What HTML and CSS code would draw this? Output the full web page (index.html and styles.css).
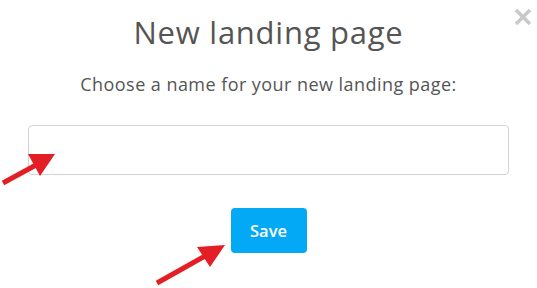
FILE: index.html
```html
<!DOCTYPE html>
<html lang="en">
<head>
<meta charset="UTF-8">
<title>New landing page</title>
<link rel="stylesheet" href="styles.css">
</head>
<body>
<div class="modal">
  <button class="close" aria-label="Close">
    <svg width="18" height="18" viewBox="0 0 18 18"><path d="M2 2 L16 16 M16 2 L2 16" stroke="#c9c9c9" stroke-width="3.6" stroke-linecap="butt"/></svg>
  </button>
  <h1 class="title">New landing page</h1>
  <p class="subtitle">Choose a name for your new landing page:</p>
  <input class="name" type="text">
  <div class="actions">
    <button class="save">Save</button>
  </div>
  <svg class="arrows" width="537" height="288" viewBox="0 0 537 288">
    <line x1="3" y1="183" x2="36" y2="165" stroke="#e31e24" stroke-width="5"/>
    <polygon points="28,154 55,154 40,176" fill="#e31e24"/>
    <line x1="157" y1="283" x2="205" y2="256" stroke="#e31e24" stroke-width="5"/>
    <polygon points="197,247 225,245 210,267" fill="#e31e24"/>
  </svg>
</div>
</body>
</html>
```

FILE: styles.css
```css
*{
    box-sizing:border-box;
    margin:0;
    padding:0;
}
body{
    font-family:"Open Sans", sans-serif;
    background:#fff;
    width:537px;
    height:288px;
    overflow:hidden;
}
.modal{
    position:relative;
    padding:13px 28px 0;
    display:flex;
    flex-direction:column;
    align-items:center;
}
.close{
    position:absolute;
    top:8px;
    right:5px;
    background:none;
    border:0;
    width:18px;
    height:18px;
}
.close svg{
    display:block;
}
.title{
    font-size:31px;
    line-height:38px;
    font-weight:500;
    color:#555;
    letter-spacing:0.75px;
}
.subtitle{
    margin-top:21px;
    font-size:18px;
    line-height:24px;
    color:#555;
    letter-spacing:0.45px;
}
.name{
    margin-top:29px;
    width:100%;
    height:50px;
    border:1px solid #d3d3d3;
    border-radius:4px;
    outline:none;
}
.actions{
    margin-top:33px;
}
.save{
    width:76px;
    height:45px;
    border:0;
    border-radius:4px;
    background:#03a9f4;
    color:#fff;
    font-family:"Open Sans", sans-serif;
    font-size:16.5px;
    font-weight:600;
}
.arrows{
    position:absolute;
    top:0;
    left:0;
    pointer-events:none;
}
```
